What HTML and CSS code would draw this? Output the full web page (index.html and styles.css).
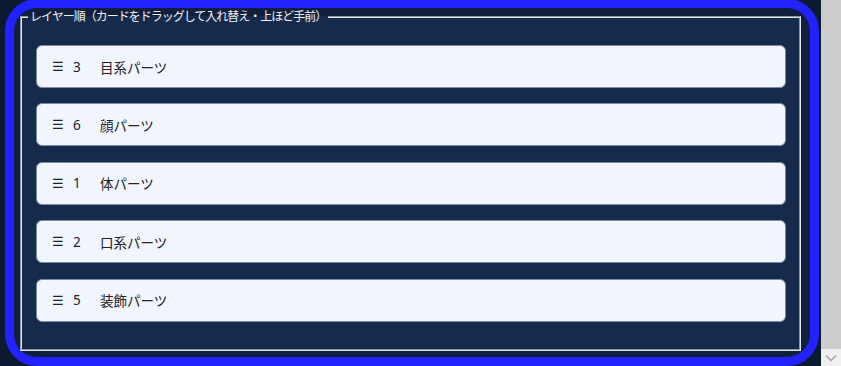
FILE: index.html
```html
<!DOCTYPE html>
<html lang="ja">
  <head>
    <meta charset="UTF-8" />
    <meta name="viewport" content="width=device-width, initial-scale=1.0" />
    <title>レイヤー順</title>
    <link rel="stylesheet" href="styles.css">
  </head>
  <body>
    <div class="page">
      <div class="panel">
        <fieldset class="layers">
          <legend>レイヤー順（カードをドラッグして入れ替え・上ほど手前）</legend>
          <div class="layer-list" id="layerList">
            <div class="layer-card" draggable="true">
              <span class="handle">☰</span><span class="num">3</span><span class="name">目系パーツ</span>
            </div>
            <div class="layer-card" draggable="true">
              <span class="handle">☰</span><span class="num">6</span><span class="name">顔パーツ</span>
            </div>
            <div class="layer-card" draggable="true">
              <span class="handle">☰</span><span class="num">1</span><span class="name">体パーツ</span>
            </div>
            <div class="layer-card" draggable="true">
              <span class="handle">☰</span><span class="num">2</span><span class="name">口系パーツ</span>
            </div>
            <div class="layer-card" draggable="true">
              <span class="handle">☰</span><span class="num">5</span><span class="name">装飾パーツ</span>
            </div>
          </div>
        </fieldset>
      </div>
    </div>
    <div class="scrollbar">
      <div class="scroll-track"></div>
      <div class="scroll-down">
        <svg width="12" height="8" viewBox="0 0 12 8"><path d="M1 1.5 L6 6.5 L11 1.5" fill="none" stroke="#a0a0a0" stroke-width="1.3"/></svg>
      </div>
    </div>
  </body>
</html>
```

FILE: styles.css
```css
html, body {
  height: 100%;
}
body {
  margin: 0;
  display: flex;
  background: #0c1a31;
  font-family: "Noto Sans", "Noto Sans CJK JP", sans-serif;
  overflow: hidden;
}
.page {
  flex: 1;
  padding: 0 2px 0 5px;
}
.panel {
  margin-top: -1px;
  height: 367px;
  box-sizing: border-box;
  border: 9px solid #2222ff;
  border-radius: 32px;
  background: #101f3c;
  padding: 1px 9px 6px 6px;
}
.layers {
  margin: 0;
  height: 100%;
  box-sizing: border-box;
  border: 2px groove #dfe5ef;
  background: #162a4b;
  padding: 20px 13px 0 14px;
}
.layers legend {
  color: #eef2f8;
  font-size: 12px;
  letter-spacing: -1px;
  padding: 0 2px;
  margin-left: -8px;
  line-height: 16px;
}
.layer-list {
  display: flex;
  flex-direction: column;
  gap: 15.4px;
}
.layer-card {
  display: flex;
  align-items: center;
  height: 43px;
  box-sizing: border-box;
  padding: 0 15px;
  background: #f1f5fd;
  border: 1px solid #7f8ba3;
  border-radius: 6px;
  color: #222;
  font-size: 13.5px;
  cursor: grab;
}
.handle {
  font-family: "DejaVu Sans", sans-serif;
  font-size: 13px;
  width: 21px;
}
.num {
  width: 27px;
}
.scrollbar {
  width: 20px;
  display: flex;
  flex-direction: column;
  background: #cdcdcd;
}
.scroll-track {
  flex: 1;
}
.scroll-down {
  height: 17px;
  background: #f0f0f0;
  display: flex;
  align-items: center;
  justify-content: center;
}
```
